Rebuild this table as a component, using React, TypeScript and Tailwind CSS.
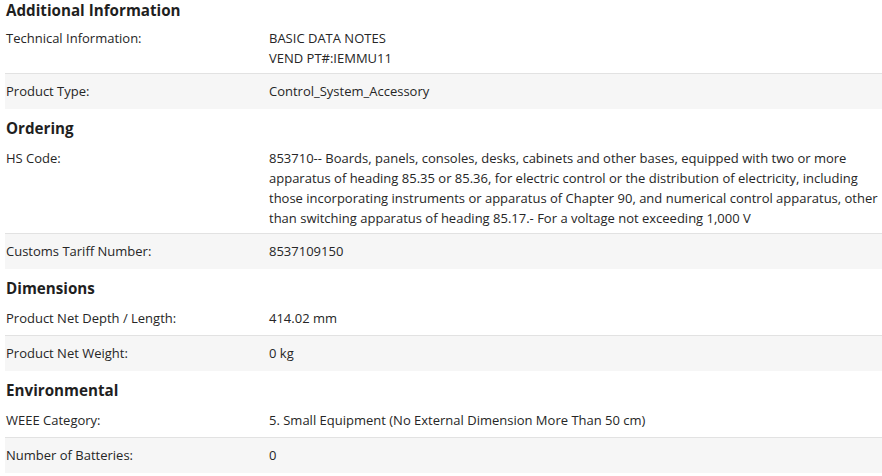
import React from 'react';

type Row = { label: string; value: React.ReactNode };
type Section = { title: string; rows: Row[] };

const sections: Section[] = [
  {
    title: 'Additional Information',
    rows: [
      {
        label: 'Technical Information:',
        value: (
          <>
            BASIC DATA NOTES
            <br />
            VEND PT#:IEMMU11
          </>
        ),
      },
      { label: 'Product Type:', value: 'Control_System_Accessory' },
    ],
  },
  {
    title: 'Ordering',
    rows: [
      {
        label: 'HS Code:',
        value: (
          <>
            853710-- Boards, panels, consoles, desks, cabinets and other bases, equipped with two or more
            <br />
            apparatus of heading 85.35 or 85.36, for electric control or the distribution of electricity, including
            <br />
            those incorporating instruments or apparatus of Chapter 90, and numerical control apparatus, other
            <br />
            than switching apparatus of heading 85.17.- For a voltage not exceeding 1,000 V
          </>
        ),
      },
      { label: 'Customs Tariff Number:', value: '8537109150' },
    ],
  },
  {
    title: 'Dimensions',
    rows: [
      { label: 'Product Net Depth / Length:', value: '414.02 mm' },
      { label: 'Product Net Weight:', value: '0 kg' },
    ],
  },
  {
    title: 'Environmental',
    rows: [
      { label: 'WEEE Category:', value: '5. Small Equipment (No External Dimension More Than 50 cm)' },
      { label: 'Number of Batteries:', value: '0' },
    ],
  },
];

export default function App() {
  return (
    <div className="w-[882px] h-[476px] overflow-hidden bg-white pl-[5px] text-[#262626] font-['Open_Sans',sans-serif]">
      {sections.map((section, si) => (
        <div key={section.title}>
          <h2
            className={`${
              si === 0 ? 'leading-[21px]' : 'pt-[11px] pb-[5px] leading-[16px]'
            } pl-px text-[15.2px] font-bold text-[#1f1f1f]`}
          >
            {section.title}
          </h2>
          {section.rows.map((row, ri) => (
            <div
              key={row.label}
              className={`flex text-[13px] leading-[20px] ${
                ri === 0
                  ? 'min-h-[35px] pt-[7px] pb-[5px] border-b border-[#e2e2e2]'
                  : 'pt-[7px] pb-[8px] bg-[#f6f6f6]'
              }`}
            >
              <div className="w-[264px] shrink-0 pl-px">{row.label}</div>
              <div className="flex-1 whitespace-nowrap">{row.value}</div>
            </div>
          ))}
        </div>
      ))}
    </div>
  );
}
